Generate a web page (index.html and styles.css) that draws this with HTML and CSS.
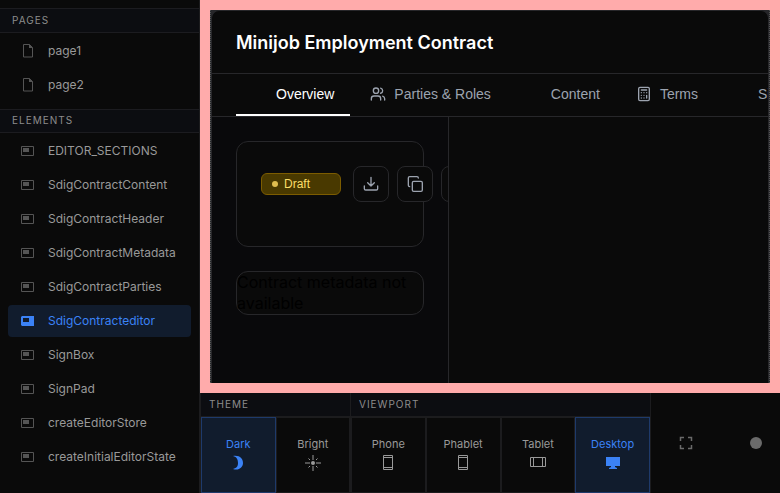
FILE: index.html
```html
<!DOCTYPE html>
<html lang="en">
<head>
<meta charset="utf-8">
<title>Minijob Employment Contract</title>
<link rel="stylesheet" href="styles.css">
</head>
<body>
<svg class="defs" aria-hidden="true">
  <symbol id="page" viewBox="0 0 14 14"><path d="M2.500 .5h6l3 3v9.500h-9z" fill="none" stroke="currentColor"/><path d="M8 0v4h4z" fill="currentColor"/></symbol>
  <symbol id="element" viewBox="0 0 14 10"><path d="M.5 .5h12v9h-12z" fill="none" stroke="currentColor"/><path d="M2 2h6v4h-6z" fill="currentColor"/></symbol>
  <symbol id="element-on" viewBox="0 0 14 10"><path fill-rule="evenodd" d="M1 0h12v10H1L0 9V1zM2 2v4h6V2z" fill="currentColor"/></symbol>
</svg>
<div class="app">
  <nav class="sidebar">
    <h2 class="group-title">Pages</h2>
    <ul class="list">
      <li><a class="item" href="#page1"><svg class="page-icon"><use href="#page"/></svg>page1</a></li>
      <li><a class="item" href="#page2"><svg class="page-icon"><use href="#page"/></svg>page2</a></li>
    </ul>
    <h2 class="group-title">Elements</h2>
    <ul class="list">
      <li><a class="item" href="#sections"><svg class="element-icon"><use href="#element"/></svg>EDITOR_SECTIONS</a></li>
      <li><a class="item" href="#content"><svg class="element-icon"><use href="#element"/></svg>SdigContractContent</a></li>
      <li><a class="item" href="#header"><svg class="element-icon"><use href="#element"/></svg>SdigContractHeader</a></li>
      <li><a class="item" href="#metadata"><svg class="element-icon"><use href="#element"/></svg>SdigContractMetadata</a></li>
      <li><a class="item" href="#parties"><svg class="element-icon"><use href="#element"/></svg>SdigContractParties</a></li>
      <li><a class="item selected" href="#editor" aria-current="page"><svg class="element-icon"><use href="#element-on"/></svg>SdigContracteditor</a></li>
      <li><a class="item" href="#signbox"><svg class="element-icon"><use href="#element"/></svg>SignBox</a></li>
      <li><a class="item" href="#signpad"><svg class="element-icon"><use href="#element"/></svg>SignPad</a></li>
      <li><a class="item" href="#store"><svg class="element-icon"><use href="#element"/></svg>createEditorStore</a></li>
      <li><a class="item" href="#state"><svg class="element-icon"><use href="#element"/></svg>createInitialEditorState</a></li>
    </ul>
  </nav>

  <div class="stage">
    <main class="frame">
      <div class="editor">
        <header class="editor-head"><h1>Minijob Employment Contract</h1></header>
        <div class="tabs">
          <button class="tab active"><span class="icon"></span>Overview</button>
          <button class="tab"><svg class="icon" viewBox="0 0 24 24"><path d="M16 21v-2a4 4 0 0 0-4-4H6a4 4 0 0 0-4 4v2M22 21v-2a4 4 0 0 0-3-3.870M16 3.130a4 4 0 0 1 0 7.750"/><circle cx="9" cy="7" r="4"/></svg>Parties &amp; Roles</button>
          <button class="tab"><span class="icon"></span>Content</button>
          <button class="tab"><svg class="icon" viewBox="0 0 24 24"><rect x="4" y="2" width="16" height="20" rx="2"/><path d="M8 6h8M16 14v4M16 10h.01M12 10h.01M8 10h.01M12 14h.01M8 14h.01M12 18h.01M8 18h.01"/></svg>Terms</button>
          <button class="tab"><span class="icon"></span>Signatures</button>
        </div>
        <div class="panes">
          <section class="overview">
            <div class="card actions">
              <span class="badge">Draft</span>
              <div class="buttons">
                <button class="square" aria-label="Download"><svg class="icon" viewBox="0 0 24 24"><path d="M12 2v13M7 10l5 5 5-5M2 15v4a2 2 0 0 0 2 2h16a2 2 0 0 0 2-2v-4"/></svg></button>
                <button class="square" aria-label="Copy"><svg class="icon" viewBox="0 0 24 24"><rect x="8" y="8" width="15" height="15" rx="2"/><path d="M4 16a2 2 0 0 1-2-2V3a2 2 0 0 1 2-2h11a2 2 0 0 1 2 2"/></svg></button>
                <button class="square" aria-label="More"></button>
              </div>
            </div>
            <div class="card metadata">Contract metadata not available</div>
          </section>
          <section class="preview"></section>
        </div>
      </div>
    </main>
  </div>

  <footer class="toolbar">
    <section class="options theme">
      <h2 class="options-title">Theme</h2>
      <div class="choices">
        <button class="choice on">Dark<svg viewBox="0 0 16 16"><path d="M3 1c7-1 10 3 10 7s-4 8-10 6c4-1 5-3 5-6s-1-6-5-7z" fill="currentColor"/></svg></button>
        <button class="choice">Bright<svg viewBox="0 0 16 16"><circle cx="8" cy="8" r="2" fill="currentColor"/><path d="M8 0v5M8 11v5M0 8h5M11 8h5M3.500 3.500l1.500 1.500M11 11l1.500 1.500M3.500 12.500l1.500-1.500M11 5l1.500-1.500" stroke="currentColor"/></svg></button>
      </div>
    </section>
    <section class="options viewport">
      <h2 class="options-title">Viewport</h2>
      <div class="choices">
        <button class="choice">Phone<svg viewBox="0 0 16 16"><path d="M3.500 .5h9v14h-9zM3.500 2.500h9M3.500 12.500h9" fill="none" stroke="currentColor"/></svg></button>
        <button class="choice">Phablet<svg viewBox="0 0 16 16"><path d="M3.500 .5h9v14h-9zM3.500 2.500h9M3.500 12.500h9" fill="none" stroke="currentColor"/></svg></button>
        <button class="choice">Tablet<svg viewBox="0 0 16 16"><path d="M.5 2.500h15v9H.5zM3.500 2.500v9M12.500 2.500v9" fill="none" stroke="currentColor"/></svg></button>
        <button class="choice on">Desktop<svg viewBox="0 0 16 16"><path d="M1 2h14v9h-5v1l2 1v1H4v-1l2-1v-1H1z" fill="currentColor"/></svg></button>
      </div>
    </section>
    <div class="tools">
      <button class="tool" aria-label="Full screen"><svg viewBox="0 0 14 14"><path d="M1.500 5V1.500H5M9 1.500h3.500V5M12.500 9v3.500H9M5 12.500H1.500V9" fill="none" stroke="currentColor" stroke-width="1.500"/></svg></button>
      <button class="tool" aria-label="Record"><svg viewBox="0 0 14 14"><circle cx="7" cy="7" r="6" fill="currentColor"/></svg></button>
    </div>
  </footer>
</div>
</body>
</html>
```
FILE: styles.css
```css
* { box-sizing: border-box; }
body { margin: 0; background: #0a0a0a; font-family: Inter, "Liberation Sans", sans-serif; }
h1, h2, ul { margin: 0; padding: 0; font-weight: 400; }
ul { list-style: none; }
button { margin: 0; padding: 0; border: 0; background: none; color: inherit; font: inherit; }
.defs { display: none; }

.app { display: grid; grid-template-columns: 200px minmax(0, 1fr); grid-template-rows: minmax(0, 1fr) auto; height: 100vh; overflow: hidden; }

.sidebar { grid-row: 1 / 3; padding-top: 8px; border-right: 1px solid #1c1c1e; color: #999; font-size: 12px; }
.group-title { height: 25px; padding-left: 12px; border: solid #1c1c20; border-width: 1px 0; background: #0c0d11; color: #8c8c8c; font-size: 10px; line-height: 22px; letter-spacing: 1px; text-transform: uppercase; }
.list + .group-title { height: 24px; line-height: 20px; }
.list { display: flex; flex-direction: column; gap: 2px; padding: 2px 8px 8px; }
.item { display: flex; align-items: center; gap: 13px; height: 32px; padding-left: 13px; border-radius: 4px; color: inherit; line-height: 16px; text-decoration: none; }
.item svg { flex: none; width: 14px; color: #555; }
.page-icon { height: 14px; }
.element-icon { height: 10px; }
.item.selected { background: #111c2d; color: #3b82f6; }
.item.selected svg { color: #3b82f6; }

.stage { padding: 10px; background: #ffabab; min-height: 0; }
.frame { height: 100%; border: 1px dotted #555; border-width: 0 1px; background: #27272a; overflow: hidden; }
.editor { display: flex; flex-direction: column; height: 100%; border: 1px solid #27272a; border-bottom: 0; border-radius: 8px 8px 0 0; background: #0a0a0a; overflow: hidden; }
.editor-head { padding: 21px 24px 19px; border-bottom: 1px solid #27272a; color: #fff; }
.editor-head h1 { font-size: 18px; font-weight: 600; line-height: 22px; }
.icon { flex: none; width: 16px; height: 16px; fill: none; stroke: currentColor; stroke-width: 2; stroke-linecap: round; stroke-linejoin: round; }
.tabs { display: flex; flex: none; gap: 4px; height: 43px; padding: 0 24px; border-bottom: 1px solid #27272a; overflow: hidden; }
.tab { display: flex; flex: none; align-items: center; gap: 8px; padding: 0 16px; border-bottom: 2px solid transparent; color: #9ca3af; font: 14px "Liberation Sans", sans-serif; }
.tab.active { border-color: #fff; color: #fff; }
.panes { display: grid; grid-template-columns: 237px 1fr; flex: 1; min-height: 0; }
.overview { display: flex; flex-direction: column; gap: 24px; padding: 24px; border-right: 1px solid #27272a; background: #09090b; overflow: hidden; }
.card { border: 1px solid #27272a; border-radius: 12px; background: #0a0a0a; }
.actions { display: flex; align-items: center; gap: 12px; padding: 24px 24px 44px; }
.badge { display: flex; flex: none; align-items: center; gap: 6px; width: 80px; height: 22px; padding: 0 10px; border: 1px solid #7c5c00; border-radius: 6px; background: #493900; color: #fbdf6a; font: 12px "Liberation Sans", sans-serif; }
.badge::before { width: 6px; height: 6px; border-radius: 50%; background: #dfbd4f; content: ""; }
.buttons { display: flex; flex: none; gap: 8px; }
.square { display: flex; flex: none; align-items: center; justify-content: center; width: 36px; height: 36px; border: 1px solid #27272a; border-radius: 8px; background: #0a0a0a; color: #9ca3af; }
.metadata { color: #000; font-size: 16px; line-height: 21px; }

.toolbar { display: flex; height: 100px; color: #999; }
.options { display: flex; flex: none; flex-direction: column; border-right: 1px solid #1c1c1e; }
.theme { width: 151px; border-left: 1px solid #1c1c1e; }
.viewport { width: 300px; }
.options-title { height: 24px; padding-left: 8px; border-bottom: 1px solid #1c1c1e; background: #0c0d11; color: #8c8c8c; font-size: 10px; line-height: 22px; letter-spacing: 1px; text-transform: uppercase; }
.choices { display: flex; flex: 1; }
.choice { display: flex; flex: 1; flex-direction: column; align-items: center; justify-content: center; gap: 4px; padding-bottom: 2px; border: 1px solid #1c1c1e; font-size: 11px; line-height: 14px; }
.choice svg { width: 16px; height: 16px; }
.choice.on { border-color: #1e3a6b; background: #111c2d; color: #3b82f6; }
.tools { display: flex; flex: 1; align-items: center; gap: 56px; padding-left: 28px; color: #6a6a6a; }
.tool svg { display: block; width: 14px; height: 14px; }
```
